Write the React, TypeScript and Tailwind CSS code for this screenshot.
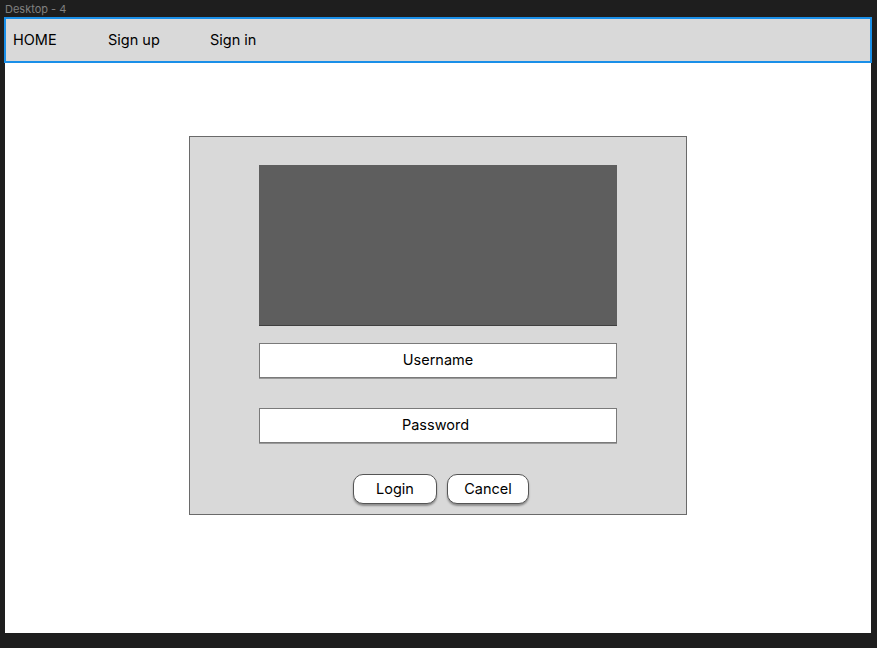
export default function App() {
  const font = { fontFamily: "Inter, 'Noto Sans', sans-serif" };
  return (
    <div className="w-[877px] h-[648px] bg-[#1e1e1e] flex flex-col" style={font}>
      {/* frame label */}
      <div className="h-[17px] pl-[5px] text-[11px] leading-[19px] text-[#808080]">Desktop - 4</div>

      {/* frame */}
      <div className="ml-[5px] w-[866px] h-[616px] bg-white flex flex-col">
        {/* nav bar (selected) */}
        <nav className="-mx-px h-[46px] bg-[#d9d9d9] border-2 border-[#1a8fe8] flex items-center text-[14.5px] text-black">
          <span className="ml-[7px] w-[95px]">HOME</span>
          <span className="w-[102px]">Sign up</span>
          <span>Sign in</span>
        </nav>

        {/* login card */}
        <div className="mx-auto mt-[73px] w-[498px] h-[379px] bg-[#d9d9d9] border border-[#6a6a6a] flex flex-col items-center pt-[28px]">
          <div className="w-[358px] h-[161px] bg-[#5e5e5e] border-b border-[#3f3f3f]" />

          <div className="mt-[17px] w-[358px] h-[35px] pb-[2px] bg-white border border-[#7a7a7a] shadow-[0_1px_0_#9a9a9a] flex items-center justify-center text-[14.5px] text-black">
            Username
          </div>

          <div className="mt-[30px] w-[358px] h-[35px] pb-[2px] bg-white border border-[#7a7a7a] shadow-[0_1px_0_#9a9a9a] flex items-center justify-center text-[14.5px] text-black">
            <span className="-ml-[5px]">Password</span>
          </div>

          <div className="mt-[31px] flex gap-[10px] pl-[6px]">
            <button className="w-[84px] h-[30px] bg-white border border-[#555] rounded-[10px] shadow-[0_2px_2px_rgba(0,0,0,0.35)] text-[14.5px] text-black">
              Login
            </button>
            <button className="w-[82px] h-[30px] bg-white border border-[#555] rounded-[10px] shadow-[0_2px_2px_rgba(0,0,0,0.35)] text-[14.5px] text-black">
              Cancel
            </button>
          </div>
        </div>
      </div>
    </div>
  );
}
